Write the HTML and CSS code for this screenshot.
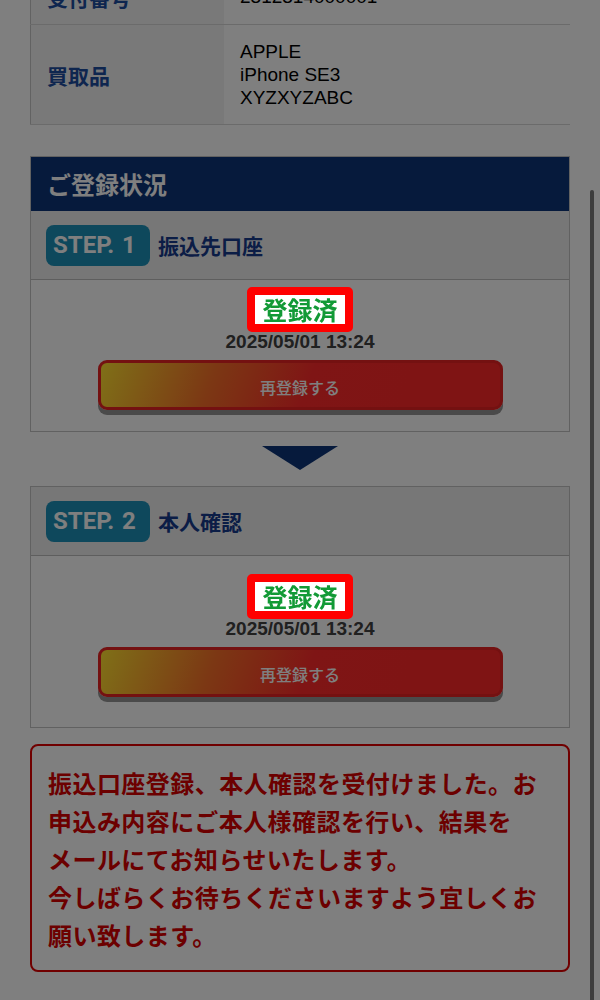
FILE: index.html
```html
<!DOCTYPE html>
<html lang="ja">
<head>
<meta charset="utf-8">
<title>ご登録状況</title>
<link rel="stylesheet" href="styles.css">
</head>
<body>
<main class="page">
  <div class="info">
    <div class="info-row info-row--first">
      <div class="info-label">受付番号</div>
      <div class="info-value">2312314000001</div>
    </div>
    <div class="info-row">
      <div class="info-label">買取品</div>
      <div class="info-value">APPLE<br>iPhone SE3<br>XYZXYZABC</div>
    </div>
  </div>

  <section class="box">
    <h2 class="box-title">ご登録状況</h2>
    <div class="step-head">
      <span class="step-badge">STEP. 1</span>
      <span class="step-name">振込先口座</span>
    </div>
    <div class="step-body step-body--first">
      <div class="done">登録済</div>
      <div class="date">2025/05/01 13:24</div>
      <button class="rereg" type="button">再登録する</button>
    </div>
  </section>

  <div class="arrow"></div>

  <section class="box">
    <div class="step-head">
      <span class="step-badge">STEP. 2</span>
      <span class="step-name">本人確認</span>
    </div>
    <div class="step-body step-body--second">
      <div class="done">登録済</div>
      <div class="date">2025/05/01 13:24</div>
      <button class="rereg" type="button">再登録する</button>
    </div>
  </section>

  <div class="notice">振込口座登録、本人確認を受付けました。お申込み内容にご本人様確認を行い、結果を<br>メールにてお知らせいたします。<br>今しばらくお待ちくださいますよう宜しくお願い致します。</div>
</main>
<div class="overlay"></div>
<div class="scroll-thumb"></div>
</body>
</html>
```
FILE: styles.css
```css
* { box-sizing: border-box; }
html, body { margin: 0; padding: 0; }
body {
  background: #ffffff;
  font-family: "Noto Sans CJK JP", "Liberation Sans", sans-serif;
  color: #000;
  overflow: hidden;
  height: 1000px;
}
.page {
  margin: -30px 30px 0 30px;
}

/* info table */
.info-row {
  display: grid;
  grid-template-columns: 194px 1fr;
  border-bottom: 1px solid #d6d6d6;
}
.info-label {
  background: #f2f2f2;
  border-left: 1px solid #c4c4c4;
  display: flex;
  align-items: center;
  padding-left: 16px;
  font-weight: 700;
  font-size: 21px;
  color: #1d4c9f;
}
.info-value {
  padding: 15px 16px 15px 16px;
  font-family: "Liberation Sans", Arial, sans-serif;
  font-size: 19px;
  line-height: 23px;
  color: #000;
}
.info-row--first .info-value { padding-top: 15px; padding-bottom: 16px; }

/* status boxes */
.box {
  margin-top: 31px;
  border: 1px solid #c2c2c2;
}
.box-title {
  margin: 0;
  height: 54px;
  background: #0c3478;
  color: #ffffff;
  font-size: 24px;
  font-weight: 700;
  display: flex;
  align-items: center;
  padding-left: 16px;
  padding-bottom: 1px;
}
.step-head {
  background: #eeeeee;
  border-bottom: 1px solid #bcbcbc;
  height: 69px;
  display: flex;
  align-items: center;
  padding-left: 15px;
  gap: 8px;
}
.step-badge {
  display: flex;
  align-items: center;
  width: 104px;
  height: 41px;
  padding-left: 7px;
  border-radius: 8px;
  background: #1c90b8;
  color: #ffffff;
  font-family: Roboto, "Liberation Sans", sans-serif;
  font-weight: 700;
  font-size: 24px;
  word-spacing: 2px;
}
.step-name {
  font-size: 21px;
  font-weight: 700;
  color: #173a8c;
}
.step-body {
  display: flex;
  flex-direction: column;
  align-items: center;
}
.step-body--first { padding: 7px 0 21px; }
.step-body--second { padding: 18px 0 30px; }

.done {
  position: relative;
  z-index: 20;
  background: #ffffff;
  border: 8px solid #ff0000;
  border-radius: 5px;
  padding: 0 7px;
  font-size: 25px;
  line-height: 29px;
  font-weight: 700;
  color: #129a36;
}
.date {
  font-family: "Liberation Sans", Arial, sans-serif;
  font-weight: 700;
  font-size: 19px;
  line-height: 20px;
  color: #404040;
}
.rereg {
  margin-top: 8px;
  width: 405px;
  height: 50px;
  border: 3px solid #e82222;
  border-radius: 9px;
  background: linear-gradient(110deg, #ffe030 0%, #f87028 28%, #ff2a2a 52%, #ff2828 100%);
  box-shadow: 0 5px 0 #959595;
  color: #ffffff;
  font-family: "Noto Sans CJK JP", sans-serif;
  font-size: 16px;
  font-weight: 500;
  padding: 3px 0 0;
}

.arrow {
  width: 0;
  height: 0;
  margin: 14px auto 16px;
  border-left: 38px solid transparent;
  border-right: 38px solid transparent;
  border-top: 24px solid #0c3478;
}
.arrow + .box { margin-top: 0; }

.notice {
  margin-top: 16px;
  border: 2px solid #e00000;
  border-radius: 8px;
  padding: 18px 10px 16px 16px;
  font-size: 24px;
  letter-spacing: 0.45px;
  line-height: 38px;
  font-weight: 700;
  color: #d80000;
}

.overlay {
  position: fixed;
  inset: 0;
  background: rgba(0, 0, 0, 0.5);
  z-index: 10;
}
.scroll-thumb {
  position: fixed;
  top: 190px;
  right: 6px;
  width: 4px;
  height: 820px;
  border-radius: 2px;
  background: #3d3d3d;
  z-index: 30;
}
```
